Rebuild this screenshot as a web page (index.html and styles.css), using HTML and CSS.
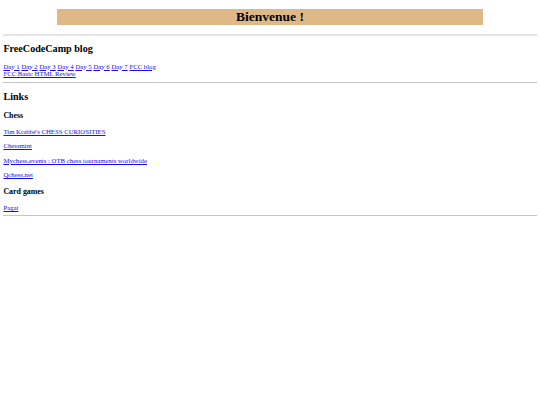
FILE: index.html
```html
<!DOCTYPE html>
<html lang="fr">
<head>
<meta charset="utf-8">
<title>Bienvenue</title>
<link rel="stylesheet" href="styles.css">
</head>
<body class="page">
<h1 class="banner">Bienvenue !</h1>
<hr class="rule rule-thick">
<h2 class="section-title">FreeCodeCamp blog</h2>
<nav class="day-nav">
<a href="#">Day 1</a> <a href="#">Day 2</a> <a href="#">Day 3</a> <a href="#">Day 4</a> <a href="#">Day 5</a> <a href="#">Day 6</a> <a href="#">Day 7</a> <a href="#">FCC blog</a><br>
<a href="#">FCC Basic HTML Review</a>
</nav>
<hr class="rule">
<h2 class="section-title">Links</h2>
<h3 class="group-title">Chess</h3>
<p class="link-item"><a href="#">Tim Krabbé's CHESS CURIOSITIES</a></p>
<p class="link-item"><a href="#">Chessmint</a></p>
<p class="link-item"><a href="#">Mychess.events : OTB chess tournaments worldwide</a></p>
<p class="link-item"><a href="#">Qchess.net</a></p>
<h3 class="group-title">Card games</h3>
<p class="link-item link-last"><a href="#">Pagat</a></p>
<hr class="rule">
</body>
</html>
```
FILE: styles.css
```css
html {
  background: #ffffff;
}

.page {
  margin: 0 3.4px;
  padding-top: 0.1px;
  font-family: "Liberation Serif", "Times New Roman", serif;
  font-size: 6.75px;
  line-height: 7.76px;
  color: #000000;
}

.page a {
  color: #1010e8;
  text-decoration: underline;
}

.banner {
  width: 80%;
  margin: 9px auto 0;
  background: #deb887;
  text-align: center;
  font-size: 13.5px;
  line-height: 15.5px;
  font-weight: bold;
}

.rule {
  margin: 3.4px 0;
  height: 0;
  border: 0;
  border-top: 1px solid #c4c4c4;
}

.rule-thick {
  margin-top: 9px;
  border-top: 2px solid #e4e4e4;
}

.section-title {
  font-size: 10.125px;
  line-height: 11.6px;
  font-weight: bold;
  margin: 8.4px 0;
}

.rule-thick + .section-title {
  margin-top: 7px;
}

.day-nav {
  margin: 0;
}

.group-title {
  font-size: 7.9px;
  line-height: 9.08px;
  font-weight: bold;
  margin: 7.9px 0;
}

.link-item {
  margin: 6.75px 0;
}

.link-last {
  margin-bottom: 0;
}
```
